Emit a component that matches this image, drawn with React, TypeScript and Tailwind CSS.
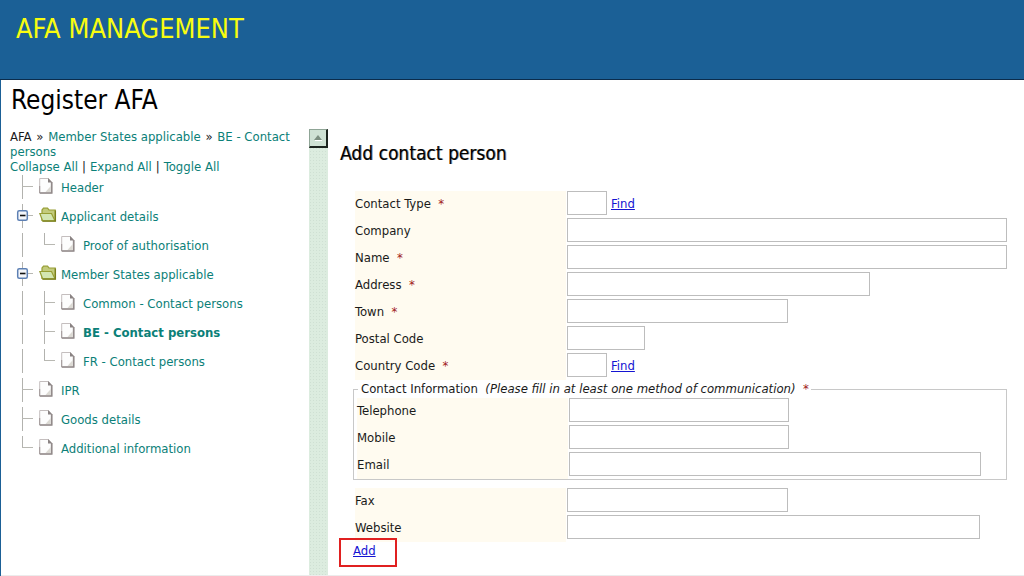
import type { ReactNode } from 'react';

type NodeKind = 'page' | 'folder';
type Guide = 'line' | 'tee' | 'elbow' | 'toggle';

interface TreeItem {
  label: string;
  kind: NodeKind;
  guides: Guide[];
  active?: boolean;
}

const tree: TreeItem[] = [
  { label: 'Header', kind: 'page', guides: ['tee'] },
  { label: 'Applicant details', kind: 'folder', guides: ['toggle'] },
  { label: 'Proof of authorisation', kind: 'page', guides: ['line', 'elbow'] },
  { label: 'Member States applicable', kind: 'folder', guides: ['toggle'] },
  { label: 'Common - Contact persons', kind: 'page', guides: ['line', 'tee'] },
  { label: 'BE - Contact persons', kind: 'page', guides: ['line', 'tee'], active: true },
  { label: 'FR - Contact persons', kind: 'page', guides: ['line', 'elbow'] },
  { label: 'IPR', kind: 'page', guides: ['tee'] },
  { label: 'Goods details', kind: 'page', guides: ['tee'] },
  { label: 'Additional information', kind: 'page', guides: ['elbow'] },
];

function GuideIcon({ type }: { type: Guide }) {
  return (
    <svg width="22" height="24" viewBox="0 0 22 24" className="shrink-0" aria-hidden="true">
      <path d={type === 'elbow' ? 'M10.5 0V12' : 'M10.5 0V24'} stroke="#b2b2ae" fill="none" />
      {type !== 'line' && <path d="M10 11.5H21" stroke="#b8b8b2" fill="none" />}
      {type === 'toggle' && (
        <>
          <rect x="5.7" y="6.7" width="9.6" height="9.6" rx="1.5" fill="#f4f6fa" stroke="#5d80b4" strokeWidth="1.5" />
          <path d="M8 11.5H13.5" stroke="#111" strokeWidth="1.6" />
        </>
      )}
    </svg>
  );
}

function PageIcon() {
  return (
    <svg width="18" height="18" viewBox="0 0 18 18" className="shrink-0" aria-hidden="true">
      <path d="M0.7 0.5H9.5L12.7 4V15H0.7Z" fill="#fdfdfd" stroke="#c4bebe" />
      <path d="M9 0L13.2 4.5H9Z" fill="#8a8383" />
      <path d="M12.7 4V15H0.7" fill="none" stroke="#928a8a" strokeWidth="1.7" />
      <path d="M0.7 8V15" fill="none" stroke="#a09898" />
      <path d="M6.5 14L11.8 8V14Z" fill="#dcdad4" />
    </svg>
  );
}

function FolderIcon() {
  return (
    <svg width="18" height="18" viewBox="0 0 18 18" className="shrink-0" aria-hidden="true">
      <path d="M3 13.5V3L4.5 1.2H8.5L10 3H16.2V13.5Z" fill="#c3cb7c" stroke="#979e34" strokeWidth="1.2" />
      <path d="M0.8 6.5H12.5L16 13.8H3.6Z" fill="#d3e6b2" stroke="#979e34" strokeWidth="1.2" />
      <path d="M16.4 3.5V14.2H3.6" fill="none" stroke="#7a7f1c" strokeWidth="1.3" />
    </svg>
  );
}

function Tree() {
  return (
    <ul className="flex flex-col gap-[5px] pl-[11px]">
      {tree.map((item) => (
        <li key={item.label} className="flex h-6 items-center">
          {item.guides.map((g, i) => (
            <GuideIcon key={i} type={g} />
          ))}
          <a
            href="#"
            className={
              item.active
                ? 'flex items-center gap-1 pl-[5px] font-bold whitespace-nowrap text-[#0b8078]'
                : 'flex items-center gap-1 pl-[5px] whitespace-nowrap text-[#0b8078]'
            }
          >
            {item.kind === 'page' ? <PageIcon /> : <FolderIcon />}
            <span className="pt-[2px]">{item.label}</span>
          </a>
        </li>
      ))}
    </ul>
  );
}

interface FieldProps {
  id: string;
  label: string;
  width: string;
  required?: boolean;
  children?: ReactNode;
}

function Field({ id, label, width, required, children }: FieldProps) {
  return (
    <div className="flex h-[27px] items-start">
      <label htmlFor={id} className="mr-px h-full w-[211px] shrink-0 bg-[#fffbf0] pt-1">
        {label}
        {required && <span className="text-[#a01818]">&nbsp; *</span>}
      </label>
      <input id={id} type="text" className={`h-6 border border-[#bdbdbd] bg-white px-1 outline-none ${width}`} />
      {children}
    </div>
  );
}

function FindLink() {
  return (
    <a href="#" className="pt-1 pl-1 text-[#1414d2] underline">
      Find
    </a>
  );
}

export default function App() {
  return (
    <div className="flex min-h-screen flex-col border-l border-[#1b6096] bg-white font-['DejaVu_Sans_Condensed','DejaVu_Sans',sans-serif] text-[13px] leading-[18px] text-[#1a1a1a]">
      <header className="-ml-px h-20 border-b border-[#0b2c4c] bg-[#1b6096] px-4 pt-3">
        <h1 className="text-[27px] leading-[34px] text-[#f8fc10]">AFA MANAGEMENT</h1>
      </header>

      <h2 className="px-[10px] pt-1 text-[26px] leading-8 text-black">Register AFA</h2>

      <div className="flex flex-1 pt-[13px]">
        <aside className="w-[308px] shrink-0">
          <div className="pr-2 pb-px pl-[9px] leading-[15px]">
            <nav aria-label="Breadcrumb">
              AFA <span className="px-px">»</span>{' '}
              <a href="#" className="text-[#0b8078]">Member States applicable</a>{' '}
              <span className="px-px">»</span>{' '}
              <a href="#" className="text-[#0b8078]">BE - Contact persons</a>
            </nav>
            <div className="flex gap-1">
              <button type="button" className="text-[#0b8078]">Collapse All</button>|
              <button type="button" className="text-[#0b8078]">Expand All</button>|
              <button type="button" className="text-[#0b8078]">Toggle All</button>
            </div>
          </div>
          <Tree />
        </aside>

        <div className="w-[19px] shrink-0 bg-[#dcecdf] bg-[radial-gradient(#cfe0d3_1px,transparent_1px)] bg-[size:3px_3px]">
          <button
            type="button"
            aria-label="Scroll up"
            className="flex h-[19px] w-full items-center justify-center border-t border-r-2 border-b-2 border-l border-t-[#8fa596] border-r-[#1c241e] border-b-[#1c241e] border-l-[#8fa596] bg-[#cfe2d4]"
          >
            <svg width="8" height="6" viewBox="0 0 8 6" aria-hidden="true">
              <path d="M0 5L4 0L8 5Z" fill="#7c8f80" />
              <path d="M1 5.5H8" stroke="#fff" />
            </svg>
          </button>
        </div>

        <main className="min-w-0 flex-1 pr-[17px] pl-3">
          <h3 className="pt-3 text-[19px] leading-6 text-black [text-shadow:1px_0_0_rgba(0,0,0,0.45)]">
            Add contact person
          </h3>
          <form id="contact-form" className="pt-[26px] pl-[15px]">
            <Field id="contact-type" label="Contact Type" width="w-10" required>
              <FindLink />
            </Field>
            <Field id="company" label="Company" width="min-w-0 flex-1" />
            <Field id="name" label="Name" width="min-w-0 flex-1" required />
            <Field id="address" label="Address" width="w-[303px]" required />
            <Field id="town" label="Town" width="w-[221px]" required />
            <Field id="postal-code" label="Postal Code" width="w-[78px]" />
            <Field id="country-code" label="Country Code" width="w-10" required>
              <FindLink />
            </Field>
            <fieldset className="-ml-[2px] border border-[#c8c8c8] pl-[3px]">
              <legend className="relative ml-px h-[18px] pr-[2px] pl-[3px] whitespace-nowrap">
                Contact Information&nbsp; <em>(Please fill in at least one method of communication)</em>
                <span className="text-[#a01818]">&nbsp; *</span>
              </legend>
              <Field id="telephone" label="Telephone" width="w-[220px]" />
              <Field id="mobile" label="Mobile" width="w-[220px]" />
              <Field id="email" label="Email" width="w-[412px]" />
            </fieldset>
            <div className="pt-2">
              <Field id="fax" label="Fax" width="w-[221px]" />
              <Field id="website" label="Website" width="w-[413px]" />
            </div>
          </form>
          <button
            type="submit"
            form="contact-form"
            className="relative -mt-1 -ml-px block h-[29px] w-[58px] border-2 border-[#e02020] pb-1 pl-3 text-left text-[#1414d2] underline"
          >
            Add
          </button>
        </main>
      </div>
      <footer className="border-t border-[#ececec]" />
    </div>
  );
}
